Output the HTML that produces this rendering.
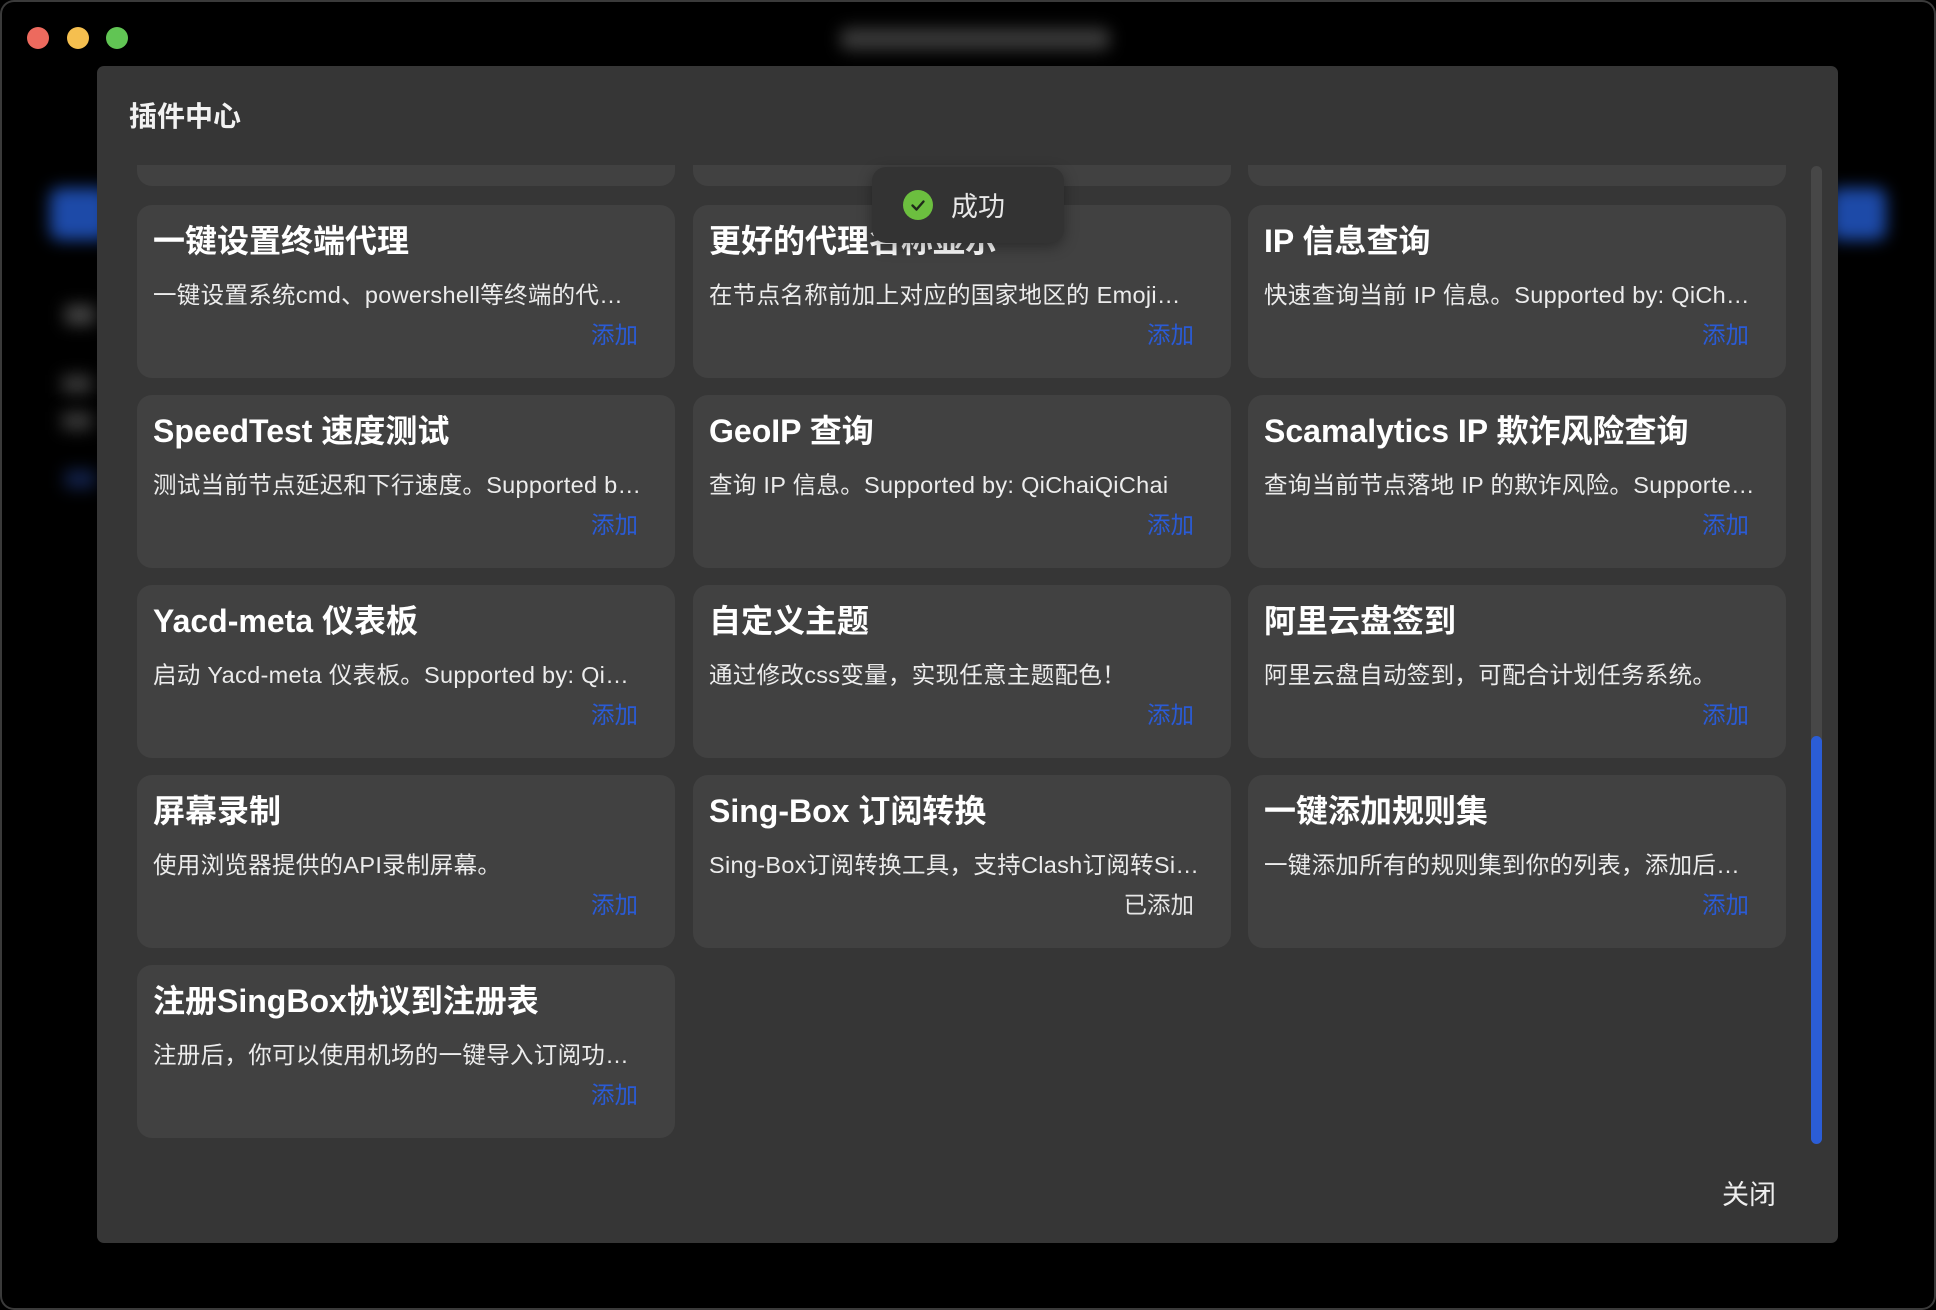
<!DOCTYPE html>
<html><head><meta charset="utf-8"><style>
*{margin:0;padding:0;box-sizing:border-box}
body{width:1936px;height:1310px;background:#000;overflow:hidden;position:relative;font-family:"Liberation Sans","Noto Sans CJK SC",sans-serif;color:#fff}
.win{position:absolute;left:0;top:0;width:1936px;height:1310px;border-radius:14px;box-shadow:inset 0 0 0 2px #3a3a3a;background:#000;overflow:hidden}
.tl{position:absolute;top:27px;width:22px;height:22px;border-radius:50%}
.blur{position:absolute;filter:blur(8px)}
.modal{position:absolute;left:97px;top:66px;width:1741px;height:1177px;background:#363636;border-radius:7px;overflow:hidden}
.mt{position:absolute;left:32px;top:29px;font-size:28px;font-weight:bold;color:#f2f2f2}
.view{position:absolute;left:0;top:99px;width:1741px;height:980px;overflow:hidden}
.card{position:absolute;width:538px;height:173px;background:#414141;border-radius:15px}
.card .t{position:absolute;left:16px;top:11px;font-size:32px;font-weight:bold;color:#fff;white-space:nowrap}
.card .d{position:absolute;left:16px;top:71px;font-size:23.5px;letter-spacing:0.3px;color:#ececec;white-space:nowrap;max-width:492px;overflow:hidden;text-overflow:ellipsis}
.card .a{position:absolute;right:37px;top:111px;font-size:23.5px;color:#2a5bd6}
.card .a.done{color:#e6e6e6}
.sb{position:absolute;left:1714px;top:100px;width:11px;height:978px;background:#474747;border-radius:6px}
.sbt{position:absolute;left:1714px;top:670px;width:11px;height:408px;background:#2b5dd6;border-radius:6px}
.close{position:absolute;left:1625px;top:1107px;font-size:27px;color:#eee}
.toast{position:absolute;left:872px;top:167px;width:192px;height:76px;background:#333;border-radius:14px;box-shadow:0 4px 14px rgba(0,0,0,.35)}
</style></head><body>
<div class="win">
<div class="tl" style="left:27px;background:#ed6a5e"></div>
<div class="tl" style="left:67px;background:#f5bf4f"></div>
<div class="tl" style="left:106px;background:#61c554"></div>
<div class="blur" style="left:840px;top:28px;width:270px;height:22px;background:#3a3a3a;border-radius:8px"></div>
<div class="blur" style="left:50px;top:188px;width:60px;height:52px;background:#1d4aa8;border-radius:10px"></div>
<div class="blur" style="left:1830px;top:188px;width:56px;height:52px;background:#1d4aa8;border-radius:10px"></div>
<div class="blur" style="left:65px;top:305px;width:30px;height:20px;background:#444"></div>
<div class="blur" style="left:62px;top:375px;width:30px;height:18px;background:#3a3a3a"></div>
<div class="blur" style="left:62px;top:412px;width:30px;height:18px;background:#3a3a3a"></div>
<div class="blur" style="left:65px;top:470px;width:30px;height:18px;background:#13234d"></div>

<div class="modal">
<div class="mt">插件中心</div>
<div class="view">
<div class="card" style="left:40px;top:-152px"></div>
<div class="card" style="left:596px;top:-152px"></div>
<div class="card" style="left:1151px;top:-152px"></div>

<div class="card" style="left:40px;top:40px"><div class="t">一键设置终端代理</div><div class="d">一键设置系统cmd、powershell等终端的代…</div><div class="a">添加</div></div>
<div class="card" style="left:596px;top:40px"><div class="t">更好的代理名称显示</div><div class="d">在节点名称前加上对应的国家地区的 Emoji；…</div><div class="a">添加</div></div>
<div class="card" style="left:1151px;top:40px"><div class="t">IP 信息查询</div><div class="d">快速查询当前 IP 信息。Supported by: QiCh…</div><div class="a">添加</div></div>

<div class="card" style="left:40px;top:230px"><div class="t">SpeedTest 速度测试</div><div class="d">测试当前节点延迟和下行速度。Supported b…</div><div class="a">添加</div></div>
<div class="card" style="left:596px;top:230px"><div class="t">GeoIP 查询</div><div class="d">查询 IP 信息。Supported by: QiChaiQiChai</div><div class="a">添加</div></div>
<div class="card" style="left:1151px;top:230px"><div class="t">Scamalytics IP 欺诈风险查询</div><div class="d">查询当前节点落地 IP 的欺诈风险。Supporte…</div><div class="a">添加</div></div>

<div class="card" style="left:40px;top:420px"><div class="t">Yacd-meta 仪表板</div><div class="d">启动 Yacd-meta 仪表板。Supported by: Qi…</div><div class="a">添加</div></div>
<div class="card" style="left:596px;top:420px"><div class="t">自定义主题</div><div class="d">通过修改css变量，实现任意主题配色！</div><div class="a">添加</div></div>
<div class="card" style="left:1151px;top:420px"><div class="t">阿里云盘签到</div><div class="d">阿里云盘自动签到，可配合计划任务系统。</div><div class="a">添加</div></div>

<div class="card" style="left:40px;top:610px"><div class="t">屏幕录制</div><div class="d">使用浏览器提供的API录制屏幕。</div><div class="a">添加</div></div>
<div class="card" style="left:596px;top:610px"><div class="t">Sing-Box 订阅转换</div><div class="d">Sing-Box订阅转换工具，支持Clash订阅转Si…</div><div class="a done">已添加</div></div>
<div class="card" style="left:1151px;top:610px"><div class="t">一键添加规则集</div><div class="d">一键添加所有的规则集到你的列表，添加后…</div><div class="a">添加</div></div>

<div class="card" style="left:40px;top:800px"><div class="t">注册SingBox协议到注册表</div><div class="d">注册后，你可以使用机场的一键导入订阅功…</div><div class="a">添加</div></div>
</div>
<div class="sb"></div><div class="sbt"></div>
<div class="close">关闭</div>
</div>

<div class="toast">
<svg style="position:absolute;left:31px;top:23px" width="30" height="30" viewBox="0 0 30 30"><circle cx="15" cy="15" r="15" fill="#6cbf3f"/><path d="M9.5 15.5l4 4 7-8" fill="none" stroke="#1f2a1a" stroke-width="2.4" stroke-linecap="round" stroke-linejoin="round"/></svg>
<div style="position:absolute;left:79px;top:18px;font-size:27px;color:#e8e8e8">成功</div>
</div>
</div>
</body></html>
